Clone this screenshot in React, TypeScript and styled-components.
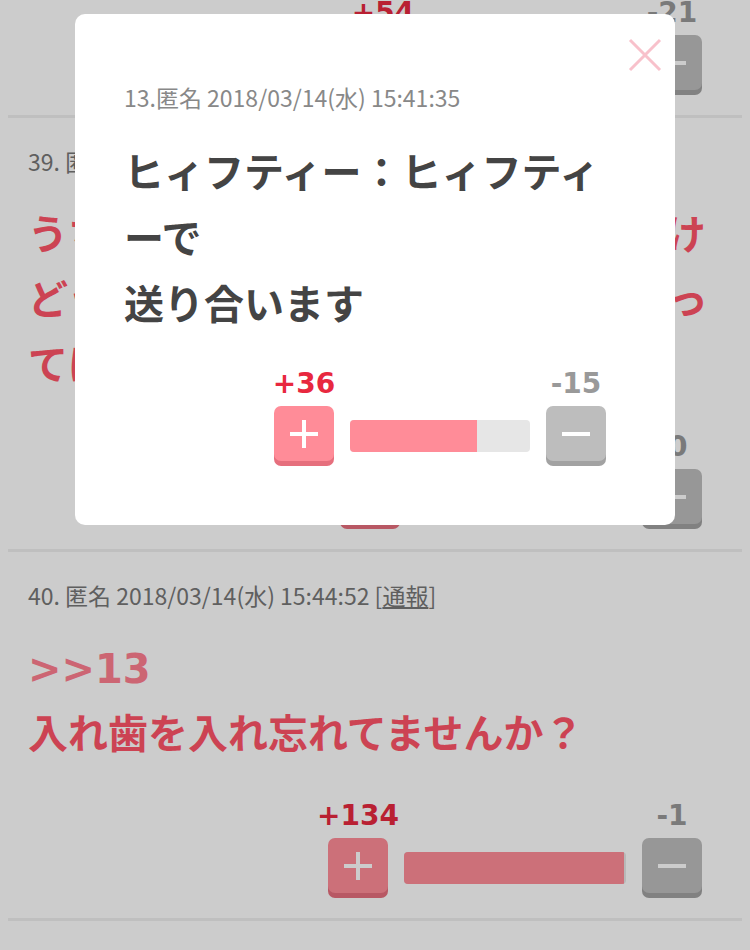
import React from 'react';
import styled, { createGlobalStyle } from 'styled-components';

const PLUS = '#ff8c98';
const PLUS_EDGE = '#e66f7d';
const MINUS = '#bdbdbd';
const MINUS_EDGE = '#a2a2a2';
const RED = '#ff5468';
const ANCHOR = '#ff7f90';

type PostType = {
    no: number;
    date: string;
    anchor?: string;
    text: string;
    plus: number;
    minus: number;
    voteWidth: number;
};

const posts: PostType[] = [
    {
        no: 38,
        date: '2018/03/14(水) 15:40:27',
        text: 'わかるー',
        plus: 54,
        minus: 21,
        voteWidth: 349,
    },
    {
        no: 39,
        date: '2018/03/14(水) 15:43:08',
        text: 'うちの夫も似たようなこと言ってたけどうせならもっといい言葉を送り合ってほしいですね',
        plus: 9,
        minus: 0,
        voteWidth: 362,
    },
    {
        no: 40,
        date: '2018/03/14(水) 15:44:52',
        anchor: '>>13',
        text: '入れ歯を入れ忘れてませんか？',
        plus: 134,
        minus: 1,
        voteWidth: 374,
    },
];

const GlobalStyle = createGlobalStyle`
    html, body {
        margin: 0;
        padding: 0;
        background: #fff;
    }
    body {
        font-family: "Noto Sans CJK JP", "Noto Sans", sans-serif;
        overflow: hidden;
        height: 950px;
    }
`;

type VoteProps = {
    plus: number;
    minus: number;
    width: number;
};

function Vote({ plus, minus, width }: VoteProps) {
    const total = plus + minus;
    const ratio = total === 0 ? 0 : (plus / total) * 100;
    return (
        <VoteBox $width={width}>
            <Side>
                <Count $plus>{`+${plus}`}</Count>
                <VoteButton type="button" $plus aria-label="plus">
                    <svg width="28" height="28" viewBox="0 0 28 28">
                        <path d="M14 0v28M0 14h28" stroke="#fff" strokeWidth="4" />
                    </svg>
                </VoteButton>
            </Side>
            <Bar>
                <BarFill style={{ width: `${ratio}%` }} />
            </Bar>
            <Side>
                <Count>{`-${minus}`}</Count>
                <VoteButton type="button" aria-label="minus">
                    <svg width="28" height="28" viewBox="0 0 28 28">
                        <path d="M0 14h28" stroke="#fff" strokeWidth="4" />
                    </svg>
                </VoteButton>
            </Side>
        </VoteBox>
    );
}

function Post({ post }: { post: PostType }) {
    return (
        <Item>
            <Meta>
                {`${post.no}. 匿名 ${post.date} [`}
                <Report>通報</Report>]
            </Meta>
            <Body>
                {post.anchor && (
                    <>
                        <Anchor>{post.anchor}</Anchor>
                        <br />
                    </>
                )}
                {post.text}
            </Body>
            <Vote plus={post.plus} minus={post.minus} width={post.voteWidth} />
        </Item>
    );
}

export default function App() {
    return (
        <>
            <GlobalStyle />
            <Feed>
                {posts.map((p) => (
                    <Post key={p.no} post={p} />
                ))}
            </Feed>
            <Overlay>
                <Dialog>
                    <Close type="button" aria-label="close">
                        <svg width="34" height="34" viewBox="0 0 34 34">
                            <path d="M2 2l30 30M32 2L2 32" stroke="#f8c1cb" strokeWidth="3" />
                        </svg>
                    </Close>
                    <DialogMeta>13.匿名 2018/03/14(水) 15:41:35</DialogMeta>
                    <DialogText>
                        ヒィフティー：ヒィフティーで
                        <br />
                        送り合います
                    </DialogText>
                    <Vote plus={36} minus={15} width={332} />
                </Dialog>
            </Overlay>
        </>
    );
}

/* the list is scrolled a little, so post 38 only shows its vote row */
const Feed = styled.main`
    margin: -186px 8px 0;
`;

const Item = styled.article`
    padding: 25px 20px 20px;
    border-bottom: 3px solid #efefef;
`;

const Meta = styled.div`
    font-size: 23px;
    line-height: 36px;
    color: #777;
    white-space: nowrap;
`;

const Report = styled.span`
    text-decoration: underline;
`;

const Body = styled.p`
    margin: 24px 0 0;
    font-family: "DejaVu Sans", "Noto Sans CJK JP", sans-serif;
    font-size: 40px;
    line-height: 65px;
    font-weight: 700;
    color: ${RED};
`;

const Anchor = styled.span`
    color: ${ANCHOR};
`;

const VoteBox = styled.div<{ $width: number }>`
    display: flex;
    align-items: flex-end;
    gap: 16px;
    width: ${(p) => p.$width}px;
    margin: 34px 20px 0 auto;
`;

const Side = styled.div`
    display: flex;
    flex-direction: column;
    align-items: center;
    gap: 7px;
    width: 60px;
    flex: none;
`;

const Count = styled.span<{ $plus?: boolean }>`
    font-family: "DejaVu Sans", sans-serif;
    font-weight: 700;
    font-size: 28px;
    line-height: 30px;
    white-space: nowrap;
    color: ${(p) => (p.$plus ? '#e8283f' : '#999')};
`;

const VoteButton = styled.button<{ $plus?: boolean }>`
    display: flex;
    align-items: center;
    justify-content: center;
    width: 60px;
    height: 55px;
    margin-bottom: 5px;
    padding: 0;
    border: none;
    border-radius: 7px;
    background: ${(p) => (p.$plus ? PLUS : MINUS)};
    box-shadow: 0 5px 0 ${(p) => (p.$plus ? PLUS_EDGE : MINUS_EDGE)};
`;

const Bar = styled.div`
    flex: 1;
    height: 32px;
    margin-bottom: 14px;
    border-radius: 4px;
    background: #e6e6e6;
    overflow: hidden;
`;

const BarFill = styled.div`
    height: 100%;
    background: ${PLUS};
`;

const Overlay = styled.div`
    position: fixed;
    inset: 0;
    display: flex;
    justify-content: center;
    align-items: flex-start;
    padding-top: 14px;
    background: rgba(0, 0, 0, 0.2);
`;

const Dialog = styled.section`
    position: relative;
    box-sizing: border-box;
    width: 600px;
    padding: 65px 49px 59px;
    border-radius: 10px;
    background: #fff;
`;

const Close = styled.button`
    position: absolute;
    top: 24px;
    right: 13px;
    padding: 0;
    border: none;
    background: none;
    display: flex;
`;

const DialogMeta = styled.div`
    font-size: 23px;
    line-height: 36px;
    color: #888;
`;

const DialogText = styled.p`
    margin: 22px 0 0;
    font-size: 40px;
    line-height: 66px;
    font-weight: 700;
    color: #444;
`;
